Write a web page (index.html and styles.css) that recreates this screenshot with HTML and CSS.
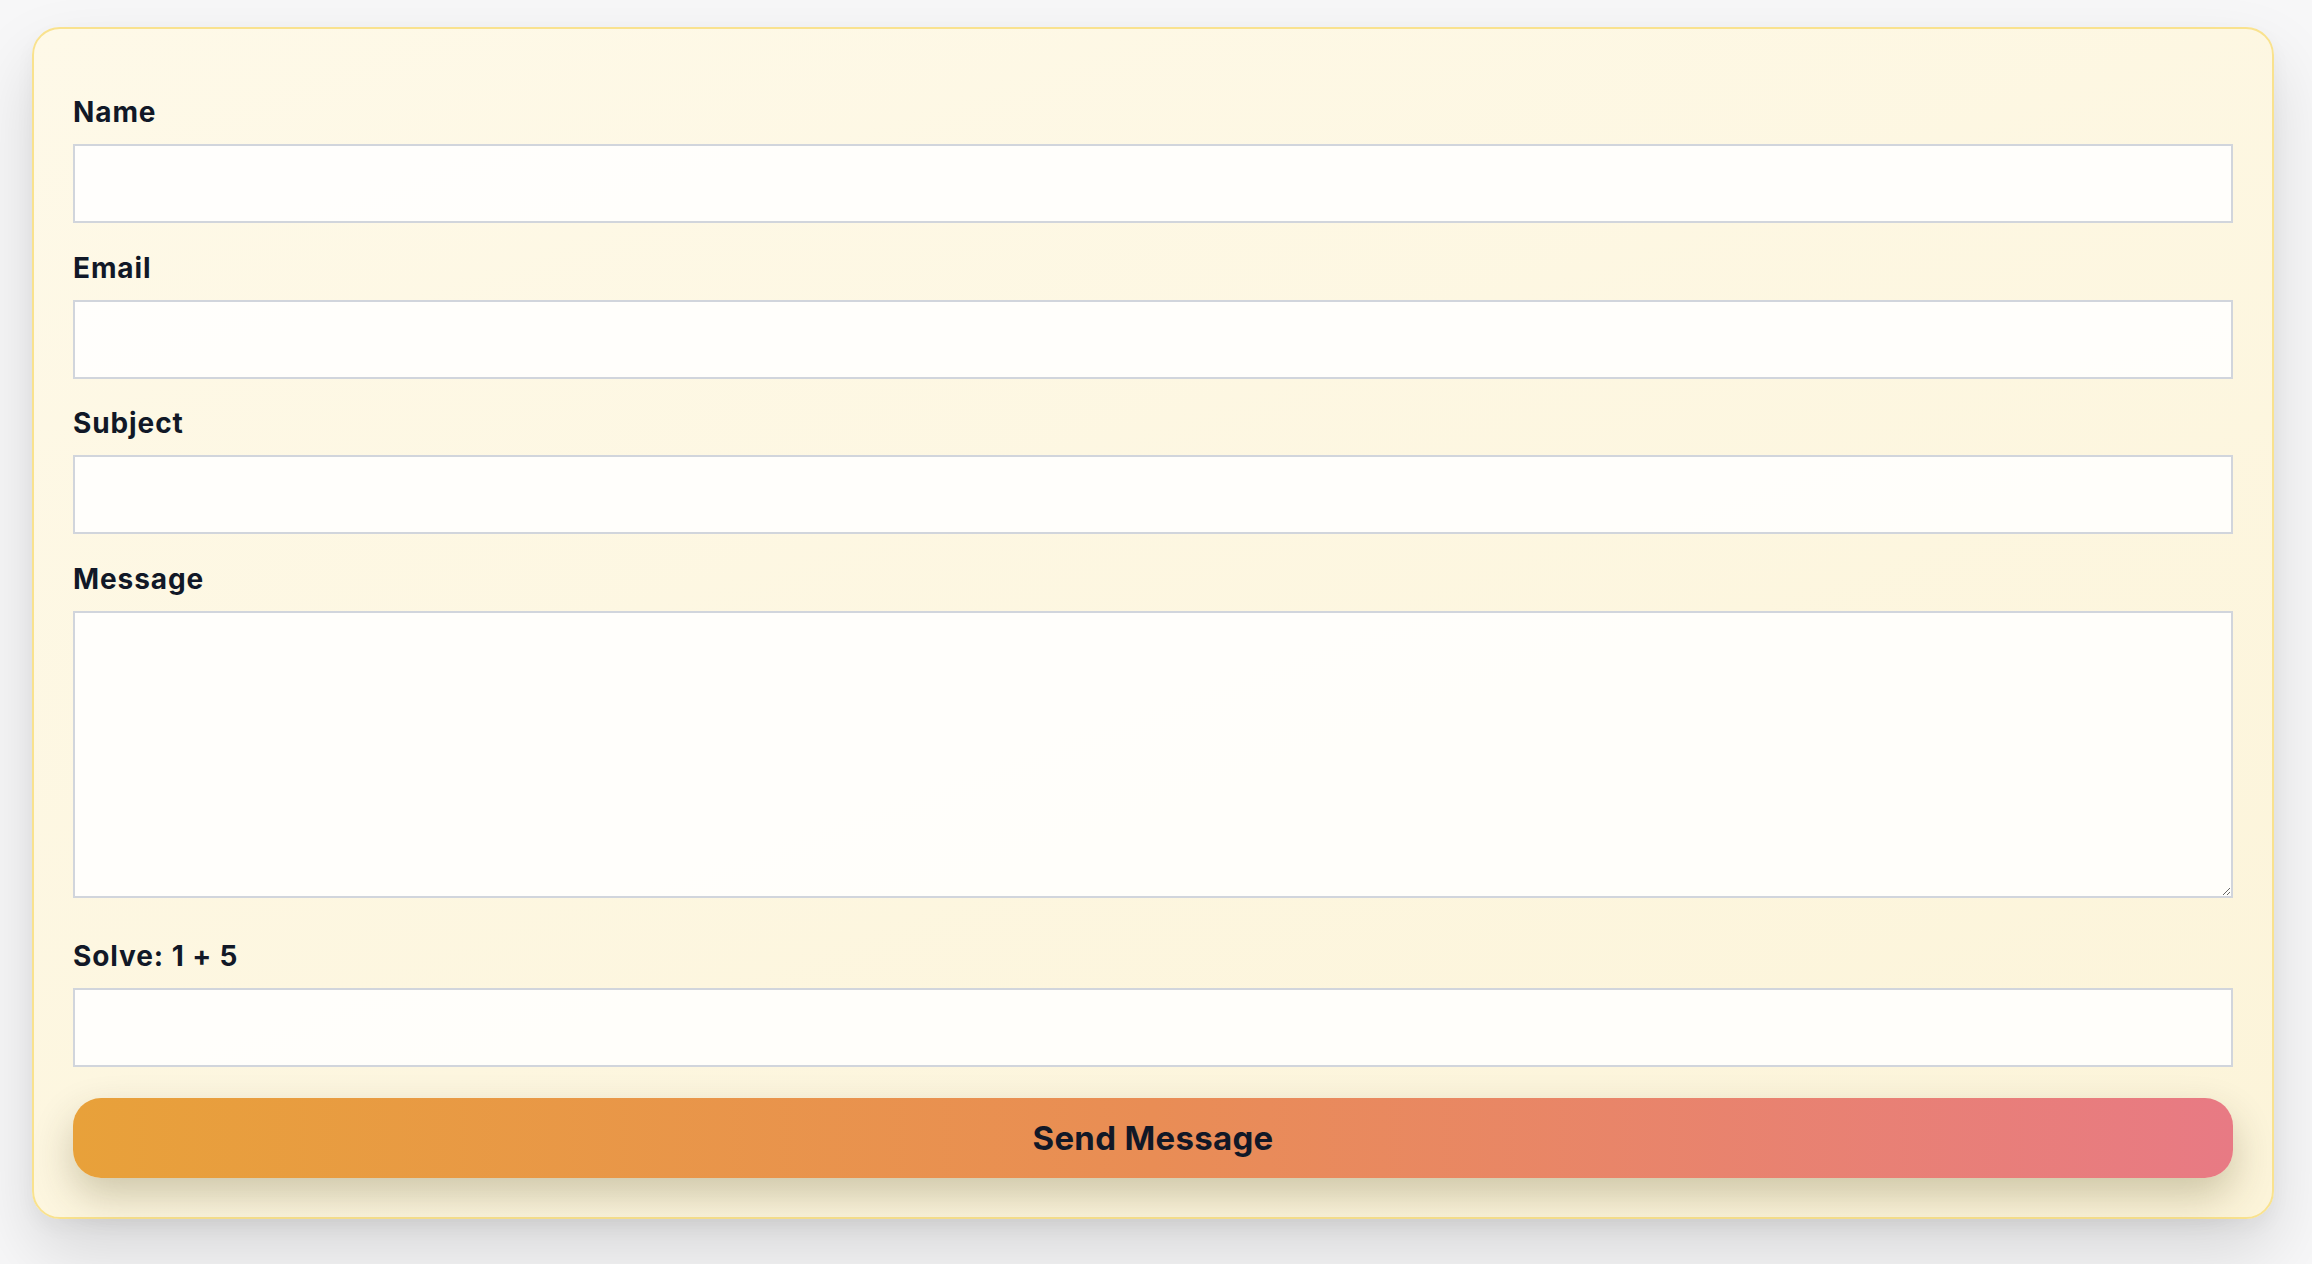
FILE: index.html
```html
<!DOCTYPE html>
<html lang="en">
<head>
<meta charset="utf-8">
<title>Contact</title>
<link rel="stylesheet" href="styles.css">
</head>
<body>
<main class="page">
  <form class="card">
    <div class="field">
      <label class="label" for="name">Name</label>
      <input class="input" id="name" type="text">
    </div>
    <div class="field">
      <label class="label" for="email">Email</label>
      <input class="input" id="email" type="email">
    </div>
    <div class="field">
      <label class="label" for="subject">Subject</label>
      <input class="input" id="subject" type="text">
    </div>
    <div class="field field-message">
      <label class="label" for="message">Message</label>
      <textarea class="input textarea" id="message"></textarea>
    </div>
    <div class="field field-captcha">
      <label class="label" for="captcha">Solve: 1 + 5</label>
      <input class="input" id="captcha" type="text">
    </div>
    <button class="submit" type="button">Send Message</button>
  </form>
</main>
</body>
</html>
```

FILE: styles.css
```css
* { box-sizing: border-box; }
html, body { margin: 0; padding: 0; }
body {
  background: #f7f7f8;
  font-family: Inter, "Noto Sans", "Liberation Sans", sans-serif;
  color: #111827;
  min-height: 1264px;
}
.page {
  padding: 27px 38px 43px 32px;
}
.card {
  display: flex;
  flex-direction: column;
  padding: 64px 39px 39px;
  border: 2px solid #f9e28e;
  border-radius: 28px;
  background: linear-gradient(160deg, #fef9e8 0%, #fcf4d9 100%);
  box-shadow: 0 34px 70px rgba(0, 0, 0, 0.13), 0 8px 20px rgba(0, 0, 0, 0.04);
}
.field {
  display: flex;
  flex-direction: column;
  margin-bottom: 25.5px;
}
.field-message { margin-bottom: 39px; }
.field-captcha { margin-bottom: 31px; }
.label {
  font-size: 28px;
  line-height: 39px;
  font-weight: 700;
  color: #111827;
  margin-bottom: 12px;
  letter-spacing: 0.9px;
}
.input {
  display: block;
  width: 100%;
  height: 79px;
  margin: 0;
  border: 2px solid #d1d5dc;
  border-radius: 0;
  background: rgba(255, 255, 255, 0.85);
  font-family: inherit;
  font-size: 24px;
  padding: 0 16px;
  outline: none;
}
.textarea {
  height: 287px;
  resize: vertical;
  padding: 16px;
}
.submit {
  height: 80px;
  width: 100%;
  border: none;
  border-radius: 28px;
  background: linear-gradient(90deg, #e8a13a 0%, #e98d55 50%, #e87a84 100%);
  box-shadow: 0 18px 40px rgba(60, 50, 0, 0.24);
  font-family: inherit;
  font-size: 33px;
  font-weight: 700;
  letter-spacing: 0.3px;
  color: #111827;
  cursor: pointer;
}
```
